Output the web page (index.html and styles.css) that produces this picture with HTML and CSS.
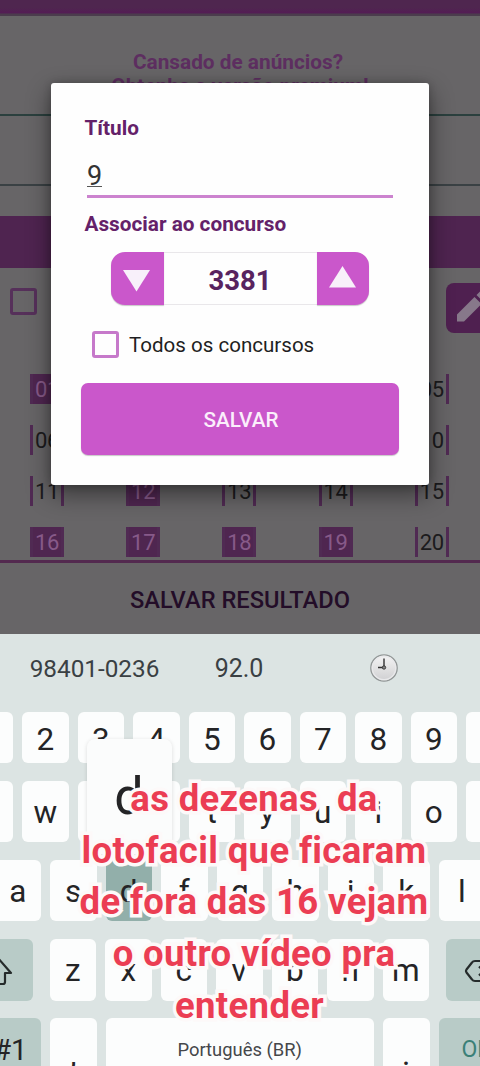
FILE: index.html
```html
<!DOCTYPE html>
<html lang="pt-BR">
<head>
<meta charset="utf-8">
<title>Salvar resultado</title>
<link rel="stylesheet" href="styles.css">
</head>
<body>
<div class="screen">
  <main class="app">
    <div class="statusbar"></div>
    <div class="promo"><p>Cansado de anúncios?</p><p>Obtenha a versão premium!</p></div>
    <div class="adslot"></div>
    <div class="band"></div>
    <div class="tools">
      <span class="check dim"></span>
      <span class="edit"><svg width="36" height="36" viewBox="0 0 36 36"><path d="M4 31.500v-7L21.500 7l7 7L11 31.500zM23.500 5l3-3q1.500-1.500 3 0l4 4q1.500 1.500 0 3l-3 3z"/></svg></span>
    </div>
    <div class="numbers">
      <span class="num on">01</span><span class="num">02</span><span class="num">03</span><span class="num">04</span><span class="num">05</span>
      <span class="num">06</span><span class="num">07</span><span class="num">08</span><span class="num">09</span><span class="num">10</span>
      <span class="num">11</span><span class="num on">12</span><span class="num">13</span><span class="num">14</span><span class="num">15</span>
      <span class="num on">16</span><span class="num on">17</span><span class="num on">18</span><span class="num on">19</span><span class="num">20</span>
    </div>
    <div class="save-result">SALVAR RESULTADO</div>
  </main>

  <section class="keyboard">
    <div class="suggest">
      <span>98401-0236</span><span class="wide">92.0</span>
      <span><svg class="clock" width="30" height="30" viewBox="0 0 30 30">
        <defs><linearGradient id="face" x1="0" y1="0" x2="0" y2="1"><stop offset="0" stop-color="#f5f5f5"/><stop offset="1" stop-color="#cfcfd1"/></linearGradient></defs>
        <circle cx="15" cy="15" r="13.200" fill="url(#face)" stroke="#929797" stroke-width="1.300"/>
        <circle cx="15" cy="15" r="11.700" fill="none" stroke="#e9e9eb" stroke-width="1.200"/>
        <path d="M15 5.500V14M9 14.500h5" stroke="#333" stroke-width="1.400" fill="none"/><circle cx="15" cy="14.500" r="1.700" fill="#888" stroke="#333" stroke-width=".9"/>
      </svg></span>
    </div>
    <div class="row digits"><b class="key">1</b><b class="key">2</b><b class="key">3</b><b class="key">4</b><b class="key">5</b><b class="key">6</b><b class="key">7</b><b class="key">8</b><b class="key">9</b><b class="key">0</b></div>
    <div class="row top"><b class="key">q</b><b class="key">w</b><b class="key">e</b><b class="key">r</b><b class="key">t</b><b class="key">y</b><b class="key">u</b><b class="key">i</b><b class="key">o</b><b class="key">p</b></div>
    <div class="row home"><b class="key">a</b><b class="key">s</b><b class="key pressed">d<span class="popup">d</span></b><b class="key">f</b><b class="key">g</b><b class="key">h</b><b class="key">j</b><b class="key">k</b><b class="key">l</b></div>
    <div class="row low">
      <b class="key fn shift"><svg width="34" height="32" viewBox="0 0 34 32"><path d="M17 3 4 18h6v9q0 2 2 2h10q2 0 2-2v-9h6z"/></svg></b>
      <b class="key">z</b><b class="key">x</b><b class="key">c</b><b class="key">v</b><b class="key">b</b><b class="key">n</b><b class="key">m</b>
      <b class="key fn back"><svg width="36" height="26" viewBox="0 0 36 26"><path d="M11 3h20q3 0 3 3v14q0 3-3 3H11q-2 0-3-1.500L2.500 14.500q-1-1.500 0-3L8 4.500Q9 3 11 3zM15 8.500l9 9M24 8.500l-9 9"/></svg></b>
    </div>
    <div class="row bottom"><b class="key fn sym">!#1</b><b class="key punct comma">,</b><b class="key space">Português (BR)</b><b class="key punct">.</b><b class="key fn ok">OK</b></div>
  </section>

  <section class="dialog">
    <label class="title">Título</label>
    <div class="field"><span>9</span></div>
    <label class="assoc">Associar ao concurso</label>
    <div class="stepper">
      <button class="step down"><svg width="28" height="22" viewBox="0 0 28 22"><path d="M0 0h27L13.500 21.500z"/></svg></button>
      <span class="value">3381</span>
      <button class="step up"><svg width="28" height="22" viewBox="0 0 28 22"><path d="M0 21.500h27L13.500 0z"/></svg></button>
    </div>
    <div class="all"><span class="check"></span><span class="all-text">Todos os concursos</span></div>
    <button class="save">SALVAR</button>
  </section>

  <div class="caption"><p>as dezenas&nbsp; da</p><p>lotofacil que ficaram</p><p>de fora das 16 vejam</p><p>o outro vídeo pra</p><p>entender</p></div>
</div>
</body>
</html>
```

FILE: styles.css
```css
* { box-sizing: border-box; }
body { margin: 0; font-family: Roboto, "Liberation Sans", sans-serif; }
p { margin: 0; }
button { border: 0; padding: 0; font-family: inherit; }

.screen { position: relative; width: 480px; height: 1066px; overflow: hidden; display: flex; flex-direction: column; }

.app { height: 634px; flex: none; background: #676567; overflow: hidden; display: flex; flex-direction: column; }
.statusbar { height: 16px; flex: none; background: linear-gradient(#4f264f 0 8px, #531d54 12px 13px, #4b3c4d 14px 16px); }
.promo { height: 98px; flex: none; padding-top: 34px; text-align: center; font-size: 20.800px; line-height: 24px; font-weight: 700; color: #5d2e60; }
.promo p:first-child { padding-right: 4px; }
.adslot { height: 72px; flex: none; border-top: 2px solid #2b403e; border-bottom: 2px solid #3a4144; }
.band { height: 52px; flex: none; margin-top: 30px; background: #4f2450; }
.tools { height: 106px; flex: none; display: flex; justify-content: space-between; padding: 20px 0 0 9.500px; }
.check { width: 27px; height: 27px; flex: none; border: 3px solid #c679ca; border-radius: 3px; }
.check.dim { border-color: #56305a; }
.edit { width: 34px; height: 50px; margin-top: -5px; flex: none; overflow: hidden; background: #4f2050; border-radius: 8px 0 0 8px; padding: 7px 0 0 7px; }
.edit svg { fill: #87788a; }
.numbers { flex: none; display: grid; grid-template-columns: repeat(5, 34px); column-gap: 62.200px; row-gap: 21px; padding-left: 30px; height: 186px; align-content: start; }
.num { height: 30px; line-height: 31px; text-align: center; font-size: 22px; letter-spacing: -.3px; color: #1c1b1d; border: solid #502a53; border-width: 0 3px; white-space: nowrap; display: flex; justify-content: center; }
.num.on { background: #4f2650; color: #875a89; }
.save-result { flex: 1; border-top: 3px solid #53294f; display: flex; align-items: center; justify-content: center; padding-top: 3px; font-size: 23.650px; font-weight: 500; color: #230d28; }

.keyboard { flex: 1; min-height: 0; background: #dce4e3; color: #242426; }
.suggest { height: 77.500px; display: grid; grid-template-columns: 189px 100px 190px; align-items: center; text-align: center; font-size: 24.300px; padding-bottom: 9px; color: #3a4043; }
.wide { font-size: 25px; }
.clock { display: block; margin: 0 auto; }
.row { display: flex; gap: 9px; width: max-content; }
.key { width: 46.500px; height: 61.500px; flex: none; border-radius: 6px; background: #fcfdfd; display: flex; align-items: center; justify-content: center; font-size: 31.500px; font-weight: 400; padding-top: 2px; }
.digits { margin: 0 0 18px -33.500px; }
.digits .key { height: 51px; padding-top: 4px; }
.top { margin: 0 0 17.500px -33.500px; }
.home { margin: 0 0 18px -5.500px; }
.low { margin: 0 0 17.500px -44px; }
.bottom { margin-left: -44px; }
.fn { background: #b8cbc7; }
.fn svg { fill: none; stroke: #252b2b; stroke-width: 2.200; stroke-linejoin: round; }
.shift { width: 77px; margin-right: 7.500px; padding-left: 6px; }
.back { width: 80px; margin-left: 7.500px; padding-right: 8px; }
.sym { width: 85px; font-size: 29px; padding-left: 16px; }
.punct { height: 70px; padding-top: 3px; }
.space { width: 268.500px; font-size: 18.400px; color: #45474a; }
.ok { width: 82px; font-size: 23px; color: #3b8077; justify-content: flex-start; padding-left: 23px; }
.pressed { position: relative; background: #92afaa; }
.popup { position: absolute; left: -19px; top: -121px; width: 85px; height: 115px; border-radius: 8px; background: #fbfcfc; box-shadow: 0 1px 4px #0002; font-size: 52px; line-height: 116px; text-align: center; }

.dialog { position: absolute; left: 51px; top: 82.500px; width: 378px; height: 402.500px; border-radius: 3px; background: #fefefe; box-shadow: 0 9px 24px #0007, 0 0 8px #0003; padding: 33.500px 30px 0; display: flex; flex-direction: column; color: #1f1f22; }
.dialog label { font-size: 20.750px; line-height: 24px; font-weight: 700; color: #642169; padding-left: 3.500px; }
.field { height: 58px; margin: 0 6px; border-bottom: 3px solid #cc83cf; font-size: 27px; line-height: 32px; padding-top: 20px; color: #333; }
.field span { display: inline-block; height: 27px; border-bottom: 1.500px solid #555; }
.assoc { margin-top: 14px; }
.stepper { width: 258px; height: 53px; margin: 16px 0 0 30px; display: flex; border-radius: 14px; }
.step { width: 52.500px; background: #ca57cb; display: flex; align-items: center; justify-content: center; box-shadow: 0 1px 1px #7776; }
.step svg { fill: #f8f0fa; }
.down { border-radius: 14px 0 0 14px; padding-top: 5px; }
.up { border-radius: 0 14px 14px 0; padding-bottom: 4px; }
.value { flex: 1; text-align: center; line-height: 55px; font-size: 27.500px; font-weight: 700; color: #58235f; border: solid #e9e7ea; border-width: 1px 0; }
.all { display: flex; align-items: center; gap: 10.500px; margin: 25.500px 0 0 10.500px; height: 27px; font-size: 20.550px; }
.all-text { padding-top: 2px; }
.save { height: 71.500px; margin-top: 25.500px; border-radius: 7px; background: #ca57cb; color: #fbeefb; font-size: 20.700px; font-weight: 500; padding-left: 2px; padding-top: 2px; box-shadow: 0 1px 1px #7776; }

.caption { position: absolute; left: 14px; top: 773px; width: 480px; text-align: center; font-size: 36.500px; letter-spacing: .35px; line-height: 51.700px; font-weight: 700; color: #eb3d53; -webkit-text-stroke: 7px #fdf9f9; paint-order: stroke fill; stroke-linejoin: round; }
.caption p:nth-child(5) { padding-right: 9px; }
```
